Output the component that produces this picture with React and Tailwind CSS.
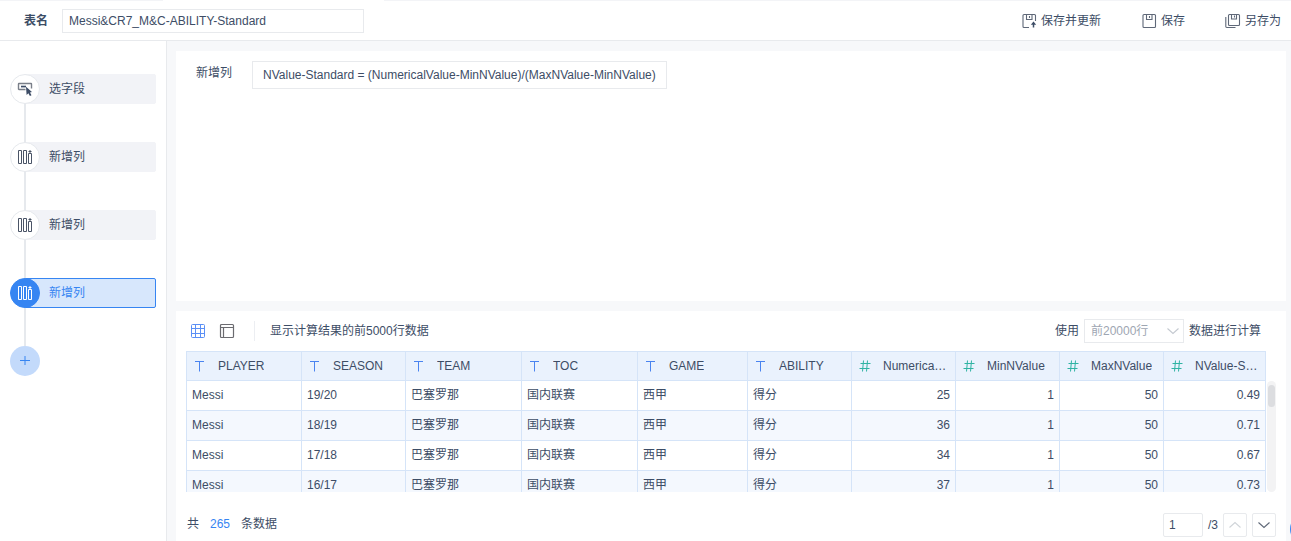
import React from "react";

const ink = "#3d4d66";
const iconGray = "#5f6878";

function SaveIcon({ kind }) {
  return (
    <svg width="16" height="16" viewBox="0 0 16 16" fill="none" stroke={iconGray} strokeWidth="1.1" className="shrink-0" aria-hidden="true">
      {kind === "update" && (
        <>
          <path d="M8 14.5H3a1 1 0 0 1-1-1v-11a1 1 0 0 1 1-1h10.5a1 1 0 0 1 1 1V8M5.5 1.5v5h5.5v-5M8.5 3v2" />
          <path d="M12.5 14.5V10" stroke={ink} strokeWidth="1.5" />
          <path d="M9.8 11.8 12.5 8.6l2.7 3.2z" fill={ink} stroke="none" />
        </>
      )}
      {kind === "save" && (
        <path d="M3 1.5h10.5a1 1 0 0 1 1 1v11a1 1 0 0 1-1 1H3a1 1 0 0 1-1-1v-11a1 1 0 0 1 1-1zM5.5 1.5v5H11v-5M8.5 3v2" />
      )}
      {kind === "copy" && (
        <path d="M4.5 1.5h9a1 1 0 0 1 1 1v9a1 1 0 0 1-1 1h-9a1 1 0 0 1-1-1v-9a1 1 0 0 1 1-1zM6.5 1.5v4.5h5V1.5M9.5 2.5v2M.8 4v9.5a1 1 0 0 0 1 1H10.5" />
      )}
    </svg>
  );
}

function PickIcon() {
  return (
    <svg width="16" height="16" viewBox="0 0 16 16" aria-hidden="true">
      <path d="M8.5 8.5H2a.5.5 0 0 1-.5-.5V3a.5.5 0 0 1 .5-.5h12a.5.5 0 0 1 .5.5v4.5" fill="none" stroke="#7a7f89" strokeWidth="1.4" />
      <path d="M4 4.7h5v1.7H4z" fill={ink} />
      <path d="M9 5.8l6 5.2-2 .4 1.5 2.8-1.6.9-1.5-2.9L9.6 14z" fill={ink} />
    </svg>
  );
}

function ColumnsIcon() {
  return (
    <svg width="16" height="16" viewBox="0 0 16 16" fill="none" stroke="currentColor" aria-hidden="true">
      <path d="M1.5 1.5h3v13h-3zM6.5 1.5h3v13h-3zM11.5 4.5h3v10h-3zM11.5 2.5h3M13 1v3" />
    </svg>
  );
}

function Step({ label, pick, active }) {
  return (
    <li className="flex h-[68px] items-start">
      <button type="button" className="flex h-[30px] w-full items-center text-left">
        <span
          className={
            "z-10 flex size-[30px] shrink-0 items-center justify-center rounded-full border " +
            (active ? "border-[#3685f2] bg-[#3685f2] text-white" : "border-[#e6e9ed] bg-white text-[#4a5466]")
          }
        >
          {pick ? <PickIcon /> : <ColumnsIcon />}
        </span>
        <span
          className={
            "-ml-4 flex h-[30px] flex-1 items-center rounded-xs border pl-6 " +
            (active ? "border-[#3685f2] bg-[#d7e7fc] text-[#3685f2]" : "border-[#f2f3f7] bg-[#f2f3f7]")
          }
        >
          {label}
        </span>
      </button>
    </li>
  );
}

function TextType() {
  return (
    <svg width="12" height="12" viewBox="0 0 12 12" fill="none" stroke="#4a84f0" className="shrink-0" aria-hidden="true">
      <path d="M1 1.5h9M5.5 1.5v10" />
    </svg>
  );
}

function NumberType() {
  return (
    <svg width="12" height="12" viewBox="0 0 12 12" fill="none" stroke="#2fb3a3" className="shrink-0" aria-hidden="true">
      <path d="M1.5 3.5h10M.5 8.5h10M4.5.5l-1 11M8.5.5l-1 11" />
    </svg>
  );
}

const columns = [
  { name: "PLAYER", width: "w-[115px]" },
  { name: "SEASON", width: "w-[104px]" },
  { name: "TEAM", width: "w-[116px]" },
  { name: "TOC", width: "w-[116px]" },
  { name: "GAME", width: "w-[110px]" },
  { name: "ABILITY", width: "w-[104px]" },
  { name: "NumericalValue", width: "w-[104px]", number: true },
  { name: "MinNValue", width: "w-[104px]", number: true },
  { name: "MaxNValue", width: "w-[104px]", number: true },
  { name: "NValue-Standard", width: "w-[102px]", number: true },
];

const rows = [
  ["Messi", "19/20", "巴塞罗那", "国内联赛", "西甲", "得分", "25", "1", "50", "0.49"],
  ["Messi", "18/19", "巴塞罗那", "国内联赛", "西甲", "得分", "36", "1", "50", "0.71"],
  ["Messi", "17/18", "巴塞罗那", "国内联赛", "西甲", "得分", "34", "1", "50", "0.67"],
  ["Messi", "16/17", "巴塞罗那", "国内联赛", "西甲", "得分", "37", "1", "50", "0.73"],
];

function Chevron({ up, color }) {
  return (
    <svg width="14" height="14" viewBox="0 0 14 14" fill="none" stroke={color} strokeWidth="1.1" aria-hidden="true">
      <path d={up ? "M1.5 9.5 7 4.5l5.5 5" : "M1.5 4.5 7 9.5l5.5-5"} />
    </svg>
  );
}

export default function App() {
  return (
    <div className="relative flex min-h-screen flex-col overflow-hidden bg-white font-['Liberation_Sans','Noto_Sans_CJK_SC',sans-serif] text-xs text-[#3d4d66]">
      <div className="flex h-px bg-[#f3f4f7]">
        <div className="ml-[163px] w-[221px] bg-white" />
      </div>
      <header className="flex h-10 items-center justify-between border-b border-[#e8eaed] pr-2.5 pl-6">
        <div className="flex items-center gap-3.5">
          <label htmlFor="table-name" className="font-bold">表名</label>
          <input
            id="table-name"
            defaultValue="Messi&CR7_M&C-ABILITY-Standard"
            className="h-6 w-[302px] border border-[#e8eaed] px-1.5 outline-none"
          />
        </div>
        <div className="flex items-center gap-10">
          <button type="button" className="flex items-center gap-1"><SaveIcon kind="update" />保存并更新</button>
          <button type="button" className="flex items-center gap-1"><SaveIcon kind="save" />保存</button>
          <button type="button" className="flex items-center gap-1"><SaveIcon kind="copy" />另存为</button>
        </div>
      </header>

      <div className="flex min-w-0 flex-1">
        <aside className="w-[167px] shrink-0 border-r border-[#e8eaed] px-2.5 pt-[33px]">
          <ol className="relative">
            <li aria-hidden="true" className="absolute top-4 left-3.5 h-[256px] w-0.5 bg-[#e6e9ed]" />
            <Step label="选字段" pick />
            <Step label="新增列" />
            <Step label="新增列" />
            <Step label="新增列" active />
            <li className="relative">
              <button type="button" aria-label="添加" className="flex size-[30px] items-center justify-center rounded-full bg-[#c3dafb]">
                <svg width="10" height="10" viewBox="0 0 10 10" stroke="#3685f2" aria-hidden="true">
                  <path d="M0 4.5h10M5 0v9" />
                </svg>
              </button>
            </li>
          </ol>
        </aside>

        <main className="flex min-w-0 flex-1 flex-col gap-2.5 bg-[#f7f8fa] pt-2.5 pr-[5px] pl-[9px]">
          <section className="flex h-[250px] items-start gap-5 bg-white px-5 pt-2.5">
            <span className="leading-6">新增列</span>
            <div className="flex h-7 items-center border border-[#e8eaed] px-2.5">
              NValue-Standard = (NumericalValue-MinNValue)/(MaxNValue-MinNValue)
            </div>
          </section>

          <section className="flex flex-1 flex-col bg-white px-2.5">
            <div className="flex h-10 items-center justify-between pr-[15px] pl-1">
              <div className="flex items-center">
                <button type="button" aria-label="表格" className="mr-[13px]">
                  <svg width="16" height="16" viewBox="0 0 16 16" fill="none" stroke="#5b8ff5" aria-hidden="true">
                    <path d="M2.5 1.5h11a1 1 0 0 1 1 1v11a1 1 0 0 1-1 1h-11a1 1 0 0 1-1-1v-11a1 1 0 0 1 1-1zM1.5 5.5h13M1.5 10.5h13M5.5 1.5v13M10.5 1.5v13" />
                  </svg>
                </button>
                <button type="button" aria-label="字段">
                  <svg width="16" height="16" viewBox="0 0 16 16" fill="none" stroke="#6b6b70" strokeWidth="1.2" aria-hidden="true">
                    <path d="M2.5 1.5h11a1 1 0 0 1 1 1v11a1 1 0 0 1-1 1h-11a1 1 0 0 1-1-1v-11a1 1 0 0 1 1-1zM1.5 4.5h13M4.5 4.5v10" />
                  </svg>
                </button>
                <span className="ml-[19px] h-5 border-l border-[#eceef2] pl-[15px] leading-5">显示计算结果的前5000行数据</span>
              </div>
              <div className="flex items-center gap-[5px]">
                <label htmlFor="row-limit">使用</label>
                <div className="relative">
                  <select id="row-limit" className="h-6 w-[100px] appearance-none border border-[#e8eaed] bg-white pl-1.5 text-[#9ea6b2] outline-none">
                    <option>前20000行</option>
                  </select>
                  <span className="pointer-events-none absolute top-[5px] right-1"><Chevron color="#c4c9d0" /></span>
                </div>
                <span>数据进行计算</span>
              </div>
            </div>

            <div className="flex h-[141px] overflow-hidden">
              <div className="min-w-0 flex-1">
                <table className="w-full table-fixed border-separate border-spacing-0 border-l border-[#d5e4f8]">
                  <thead>
                    <tr className="h-[30px] bg-[#eaf2fd]">
                      {columns.map((c) => (
                        <th key={c.name} title={c.name} className={c.width + " border-t border-r border-b border-[#d5e4f8] p-0 font-normal"}>
                          <div className="flex items-center pr-1.5 pl-[7px]">
                            {c.number ? <NumberType /> : <TextType />}
                            <span className="ml-3 truncate">{c.name}</span>
                          </div>
                        </th>
                      ))}
                    </tr>
                  </thead>
                  <tbody>
                    {rows.map((row, r) => (
                      <tr key={r} className={"h-[30px] " + (r % 2 ? "bg-[#f4f8fe]" : "bg-white")}>
                        {row.map((cell, i) => (
                          <td
                            key={i}
                            className={"border-r border-b border-[#d5e4f8] px-[5px] pt-0 pb-0.5 " + (columns[i].number ? "text-right" : "text-left")}
                          >
                            {cell}
                          </td>
                        ))}
                      </tr>
                    ))}
                  </tbody>
                </table>
              </div>
              <div className="mt-[30px] ml-px w-[9px] rounded-full bg-[#f3f3f4] px-px pt-1">
                <div className="h-[22px] rounded-full bg-[#dcdde0]" />
              </div>
            </div>

            <footer className="flex h-[49px] items-center justify-between pt-4">
              <p className="flex gap-[11px] pb-0.5 pl-px"><span>共</span><span className="text-[#3685f2]">265</span><span>条数据</span></p>
              <div className="flex items-center gap-[5px]">
                <input aria-label="页码" defaultValue="1" className="h-6 w-10 rounded-xs border border-[#e8eaed] px-[5px] outline-none" />
                <span>/3</span>
                <button type="button" aria-label="上一页" disabled className="flex size-6 items-center justify-center rounded-xs border border-[#e8eaed]"><Chevron up color="#d0d4d9" /></button>
                <button type="button" aria-label="下一页" className="flex size-6 items-center justify-center rounded-xs border border-[#e8eaed]"><Chevron color={iconGray} /></button>
              </div>
            </footer>
          </section>
        </main>
      </div>
      <div aria-hidden="true" className="absolute -right-[29px] bottom-[-3px] size-[30px] rounded-full bg-[#3685f2]" />
    </div>
  );
}
